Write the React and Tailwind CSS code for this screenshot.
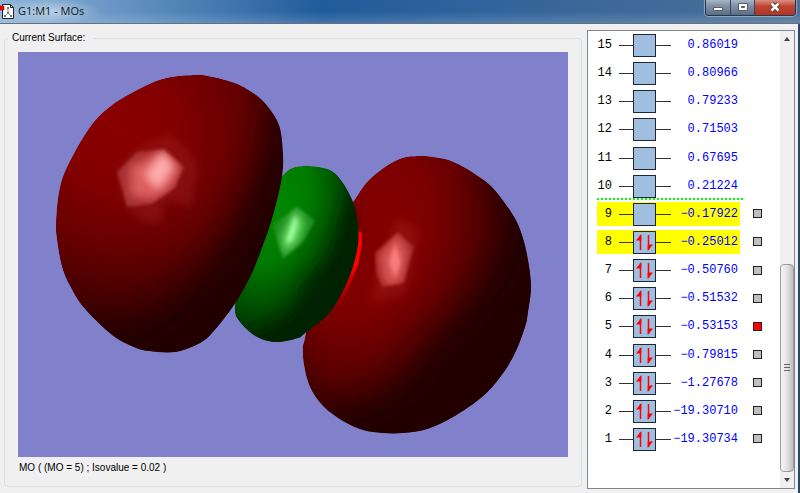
import { useState } from 'react';

const orbitals = [
  { id: 15, energy: '0.86019' },
  { id: 14, energy: '0.80966' },
  { id: 13, energy: '0.79233' },
  { id: 12, energy: '0.71503' },
  { id: 11, energy: '0.67695' },
  { id: 10, energy: '0.21224' },
  { id: 9, energy: '-0.17922', highlighted: true, surface: true },
  { id: 8, energy: '-0.25012', highlighted: true, surface: true, occupied: true },
  { id: 7, energy: '-0.50760', surface: true, occupied: true },
  { id: 6, energy: '-0.51532', surface: true, occupied: true },
  { id: 5, energy: '-0.53153', surface: true, occupied: true },
  { id: 4, energy: '-0.79815', surface: true, occupied: true },
  { id: 3, energy: '-1.27678', surface: true, occupied: true },
  { id: 2, energy: '-19.30710', surface: true, occupied: true },
  { id: 1, energy: '-19.30734', surface: true, occupied: true },
];

// Closed Catmull-Rom curve through the given points
const smoothPath = (points) => {
  const n = points.length;
  let d = `M${points[0][0]} ${points[0][1]}`;
  for (let i = 0; i < n; i++) {
    const a = points[(i - 1 + n) % n];
    const b = points[i];
    const c = points[(i + 1) % n];
    const e = points[(i + 2) % n];
    d += `C${b[0] + (c[0] - a[0]) / 6} ${b[1] + (c[1] - a[1]) / 6} ${c[0] - (e[0] - b[0]) / 6} ${c[1] - (e[1] - b[1]) / 6} ${c[0]} ${c[1]}`;
  }
  return `${d}Z`;
};

const LEFT_LOBE = smoothPath([
  [193, 75], [208, 76], [232, 82], [247, 89], [264, 102], [279, 125], [283, 155], [282, 176], [277, 200],
  [270, 225], [260, 253], [250, 277], [234, 305], [212, 333], [198, 344], [175, 352], [149, 351], [134, 347],
  [112, 335], [84, 308], [70, 286], [62, 267], [57, 240], [56, 222], [59, 192], [67, 167], [90, 127],
  [112, 105], [141, 88], [166, 78],
]);
const GREEN_LOBE = smoothPath([
  [295, 167], [319, 167], [337, 175], [353, 202], [358, 228], [357, 250], [348, 280], [330, 312], [305, 333],
  [298, 338], [277, 342], [257, 337], [239, 321], [235, 305], [242, 265], [270, 190], [282, 176],
]);
const RIGHT_LOBE = smoothPath([
  [353, 202], [370, 179], [397, 160], [420, 156], [445, 159], [460, 165], [475, 174], [493, 188], [513, 215],
  [522, 235], [528, 260], [531, 287], [528, 312], [525, 327], [515, 353], [501, 376], [482, 397], [453, 417],
  [427, 429], [403, 433], [383, 433], [363, 430], [343, 421], [323, 406], [310, 387], [304, 365], [303, 347],
  [306, 332], [320, 250],
]);

const TitleBar = () => (
  <header className="flex h-6 shrink-0 items-start justify-between border-b border-[#66717f] bg-linear-to-r from-[#8fb6d9] via-[#1f5c9c] via-40% to-[#4d7098]">
    <div className="flex h-full w-full items-center justify-between bg-linear-to-b from-transparent via-transparent to-white/15">
      <div className="flex h-full items-center gap-1 bg-radial from-white/45 to-transparent to-75% pr-4 pb-0.5">
        <svg className="h-4 w-3.5" viewBox="0 0 14 16" aria-hidden="true">
          <path d="M2.500 1.500h8l3 3v11h-11z" fill="#fff" stroke="#222" />
          <path d="M10.500 1.500v3h3" fill="none" stroke="#222" />
          <path d="M8 5v5M8 10l-3 3M8 10l3 3" stroke="#888" fill="none" />
          <path d="M7 4h2v2H7zM7 9h2v2H7zM4 12h2v2H4zM10 12h2v2h-2z" fill="#777" />
          <path d="M0 3h4v4H0z" fill="#f00" stroke="#600" strokeWidth=".5" />
        </svg>
        <h1 className="font-['Open_Sans',sans-serif] text-[11px] leading-4 text-[#101820]">G1:M1 - MOs</h1>
      </div>
      <div className="mr-1 flex h-4 self-start overflow-hidden rounded-b border border-t-0 border-[#24364e] shadow-[0_0_1px_1px_rgba(255,255,255,0.4)]">
        <button type="button" aria-label="Minimize" className="flex w-[25px] items-center justify-center border-r border-[#34475f] bg-linear-to-b from-[#a8b6c8] via-[#8594a9] via-35% to-[#5a6d86]">
          <svg className="h-3 w-3" viewBox="0 0 12 12">
            <path d="M1.500 5.500h9v3h-9z" fill="#fff" stroke="#555e6a" />
          </svg>
        </button>
        <button type="button" aria-label="Maximize" className="flex w-6 items-center justify-center border-r border-[#34475f] bg-linear-to-b from-[#a8b6c8] via-[#8594a9] via-35% to-[#5a6d86]">
          <svg className="h-3 w-3" viewBox="0 0 12 12">
            <path d="M1.500 1.500h9v7h-9zM4.500 4.500h3v1h-3z" fill="#fff" fillRule="evenodd" stroke="#555e6a" />
          </svg>
        </button>
        <button type="button" aria-label="Close" className="flex w-10 items-center justify-center bg-linear-to-b from-[#d99184] via-[#bd4632] via-40% to-[#b03522]">
          <svg className="h-3 w-3" viewBox="0 0 12 12" fill="none">
            <path d="M2.500 1.500l7 7M9.500 1.500l-7 7" stroke="#5d3833" strokeWidth="4.500" />
            <path d="M2.500 1.500l7 7M9.500 1.500l-7 7" stroke="#fff" strokeWidth="2.500" />
          </svg>
        </button>
      </div>
    </div>
  </header>
);

const SurfaceView = () => (
  <svg className="h-full w-full bg-[#8080cb]" viewBox="18 52 550 405" role="img" aria-label="Molecular orbital surface">
    <defs>
      <radialGradient id="leftShade" gradientUnits="userSpaceOnUse" cx="120" cy="130" r="210">
        <stop offset="0" stopColor="#8c0000" />
        <stop offset=".3" stopColor="#800000" />
        <stop offset=".55" stopColor="#680000" />
        <stop offset=".85" stopColor="#400000" />
        <stop offset="1" stopColor="#260000" />
      </radialGradient>
      <radialGradient id="rightShade" gradientUnits="userSpaceOnUse" cx="0" cy="0" r="1" gradientTransform="translate(368 235) rotate(20) scale(150 215)">
        <stop offset="0" stopColor="#850000" />
        <stop offset=".4" stopColor="#7c0000" />
        <stop offset=".7" stopColor="#560000" />
        <stop offset="1" stopColor="#280000" />
      </radialGradient>
      <radialGradient id="greenShade" gradientUnits="userSpaceOnUse" cx="0" cy="0" r="1" gradientTransform="translate(276 210) rotate(18) scale(78 135)">
        <stop offset="0" stopColor="#008800" />
        <stop offset=".4" stopColor="#007a00" />
        <stop offset=".75" stopColor="#004e00" />
        <stop offset="1" stopColor="#002600" />
      </radialGradient>
      <linearGradient id="rimShade" x1="0" y1="0" x2="0" y2="1">
        <stop offset=".4" stopColor="#ff0000" />
        <stop offset="1" stopColor="#700000" />
      </linearGradient>
      <filter id="soft" x="-50%" y="-50%" width="200%" height="200%">
        <feGaussianBlur stdDeviation="16" />
      </filter>
      <filter id="softer" x="-50%" y="-50%" width="200%" height="200%">
        <feGaussianBlur stdDeviation="9" />
      </filter>
      <filter id="glow" x="-50%" y="-50%" width="200%" height="200%">
        <feGaussianBlur stdDeviation="4" />
      </filter>
      <filter id="facet" x="-20%" y="-20%" width="140%" height="140%">
        <feGaussianBlur stdDeviation="1.500" />
      </filter>
      <clipPath id="leftClip"><path d={LEFT_LOBE} /></clipPath>
      <clipPath id="greenClip"><path d={GREEN_LOBE} /></clipPath>
      <clipPath id="rightClip"><path d={RIGHT_LOBE} /></clipPath>
      <clipPath id="leftFacet"><path d="M117 172L137 152L164 149L184 167L175 188L152 204L127 207Z" /></clipPath>
      <clipPath id="greenFacet"><path d="M297 206L315 221L303 242L283 259L277 242L273 225Z" /></clipPath>
      <clipPath id="rightFacet"><path d="M398 232L414 247L409 263L404 283L382 287L376 273L375 253Z" /></clipPath>
    </defs>

    {/* Right lobe */}
    <g clipPath="url(#rightClip)">
      <path d={RIGHT_LOBE} fill="url(#rightShade)" />
      <path d="M485 150L512 225L497 275L465 310L430 345L400 385L365 405L310 415L320 460L560 460L560 150Z" fill="#220000" filter="url(#soft)" />
      <path d="M298 320L312 385L350 430L300 450Z" fill="#300000" opacity=".5" filter="url(#softer)" />
      <path d="M355 195L365 235L350 275L335 290L345 195Z" fill="#650000" opacity=".5" filter="url(#softer)" />
      <path d="M397 217L419 229L414 260L404 295L370 303L380 260Z" fill="#c03535" opacity=".25" filter="url(#glow)" />
      <g filter="url(#facet)">
        <g clipPath="url(#rightFacet)">
          <path d="M398 232L414 247L409 263L404 283L382 287L376 273L375 253Z" fill="#a02626" />
          <path d="M397 233L408 250L406 270L399 286L384 284L379 256Z" fill="#d85555" filter="url(#glow)" />
          <path d="M395 243L401 262L395 278L389 262Z" fill="#ff8888" filter="url(#facet)" opacity=".8" />
        </g>
      </g>
    </g>

    {/* Rim where the far lobe shows past the green one */}
    <path d="M356 231L361 232L362 234L362 245L358 265L350 285L342 302L335 312L328 313L343 285Z" fill="url(#rimShade)" />

    {/* Centre lobe */}
    <g clipPath="url(#greenClip)">
      <path d={GREEN_LOBE} fill="url(#greenShade)" />
      <path d="M355 175L343 225L330 260L308 280L296 312L270 332L235 341L260 360L375 350L375 180Z" fill="#002200" filter="url(#softer)" />
      <g filter="url(#facet)">
        <g clipPath="url(#greenFacet)">
          <path d="M297 206L315 221L303 242L283 259L277 242L273 225Z" fill="#1f901f" />
          <path d="M296 209L303 222L298 240L284 254L283 236Z" fill="#74e874" filter="url(#glow)" />
          <path d="M295 215L297 222L292 240L286 243Z" fill="#a5ffa5" filter="url(#facet)" />
        </g>
      </g>
    </g>

    {/* Left lobe */}
    <g clipPath="url(#leftClip)">
      <path d={LEFT_LOBE} fill="url(#leftShade)" />
      <path d="M275 80L268 135L253 185L230 235L200 275L165 310L125 332L85 330L120 375L260 370L310 180L295 80Z" fill="#220000" filter="url(#soft)" />
      <path d="M135 150L168 133L190 152L198 165L192 207L165 200L162 223L143 223L127 207L117 172Z" fill="#b03030" opacity=".28" filter="url(#glow)" />
      <g filter="url(#facet)">
        <g clipPath="url(#leftFacet)">
          <path d="M117 172L137 152L164 149L184 167L175 188L152 204L127 207Z" fill="#a42e2e" />
          <path d="M130 166L164 151L180 168L172 187L151 200L130 196Z" fill="#dc5c5c" filter="url(#glow)" />
          <path d="M163 151L174 167L165 180L158 190L144 175Z" fill="#ffacac" filter="url(#glow)" />
        </g>
      </g>
    </g>
  </svg>
);

const LevelDiagram = ({ occupied }) => (
  <svg className="ml-[7px] h-6 w-[52px] shrink-0" viewBox="0 0 52 24" aria-hidden="true">
    <path d="M0 12.500h52" stroke="#333" />
    <rect x="14.500" y="1.500" width="22" height="22" fill="#a0bfe0" stroke="#1c2733" />
    {occupied && (
      <>
        <path d="M21.500 20V5" stroke="#f00" strokeWidth="1.500" />
        <path d="M22.300 4v6.500l-5.300 0z" fill="#f00" />
        <path d="M29.500 5v15" stroke="#f00" strokeWidth="1.500" />
        <path d="M28.700 21v-6.500l5.300 0z" fill="#f00" />
      </>
    )}
  </svg>
);

const OrbitalRow = ({ orbital, checked, onToggle }) => (
  <li className="relative flex items-center">
    {orbital.id === 9 && (
      <div className="absolute -top-[2px] left-0 h-[2px] w-[147px] bg-[repeating-linear-gradient(90deg,#00ff00_0_2px,#ffffff_2px_4px)]" />
    )}
    <label
      htmlFor={orbital.surface ? `mo-${orbital.id}` : undefined}
      className={`flex h-6 w-[143px] items-center pr-[2px] ${orbital.highlighted ? 'bg-[#ffff00]' : ''}`}
    >
      <span className="w-[15px] text-right text-black">{orbital.id}</span>
      <LevelDiagram occupied={orbital.occupied} />
      <span className="flex-1 text-right text-[#0000ff]">{orbital.energy.replace('-', '−')}</span>
    </label>
    {orbital.surface && (
      <input
        id={`mo-${orbital.id}`}
        type="checkbox"
        checked={checked}
        onChange={onToggle}
        className="ml-[13px] h-[9px] w-[9px] appearance-none border border-[#222] bg-[#c0c0c0] checked:bg-[#ff0000]"
      />
    )}
  </li>
);

const Scrollbar = () => (
  <div className="flex w-3.5 shrink-0 flex-col bg-[#f0f0f0]">
    <button type="button" aria-label="Scroll up" className="flex h-4 items-center justify-center">
      <svg className="h-1 w-1.5" viewBox="0 0 6 4"><path d="M0 4l3-4 3 4z" fill="#444" /></svg>
    </button>
    <div className="flex flex-1 flex-col justify-end">
      <div className="flex h-[49%] items-center justify-center rounded-sm border border-[#9a9a9a] bg-linear-to-r from-[#f5f5f5] via-[#e3e3e3] to-[#bdbdbd]">
        <svg className="h-2 w-1.5" viewBox="0 0 6 8"><path d="M0 .5h6M0 3.500h6M0 6.500h6" stroke="#666" /></svg>
      </div>
    </div>
    <button type="button" aria-label="Scroll down" className="flex h-4 items-center justify-center">
      <svg className="h-1 w-1.5" viewBox="0 0 6 4"><path d="M0 0l3 4 3-4z" fill="#444" /></svg>
    </button>
  </div>
);

const App = () => {
  const [selected, setSelected] = useState([5]);

  const toggle = (id) => {
    setSelected((prev) => (prev.includes(id) ? prev.filter((n) => n !== id) : [...prev, id]));
  };

  return (
    <div className="flex h-screen flex-col bg-[#f0f0f0] font-['Liberation_Sans',Arial,sans-serif]">
      <TitleBar />
      <main className="flex min-h-0 flex-1 gap-[5px] border-r-2 border-[#2c4666] pt-1.5 pr-[3px] pb-1 pl-1">
        {/* Surface preview */}
        <fieldset className="mt-px mb-[2px] min-w-0 flex-1 rounded border border-[#d5dfe5] px-[13px]">
          <legend className="-ml-2.5 px-1 pr-2 text-[10px] leading-[14px] text-black">Current Surface:</legend>
          <div className="flex h-full flex-col pt-[7px]">
            <div className="min-h-0 flex-1">
              <SurfaceView />
            </div>
            <p className="h-[29px] pt-1 pl-px text-[10px] leading-[14px] text-black">MO ( (MO = 5) ; Isovalue = 0.02 )</p>
          </div>
        </fieldset>

        {/* Orbital energy levels */}
        <section className="flex w-[208px] shrink-0 border border-[#828790] bg-white">
          <ul className="grid flex-1 auto-rows-fr pb-[35px] pl-[9px] font-['Liberation_Mono',monospace] text-[12px] leading-4">
            {orbitals.map((orbital) => (
              <OrbitalRow
                key={orbital.id}
                orbital={orbital}
                checked={selected.includes(orbital.id)}
                onToggle={() => toggle(orbital.id)}
              />
            ))}
          </ul>
          <Scrollbar />
        </section>
      </main>
    </div>
  );
};

export default App;
